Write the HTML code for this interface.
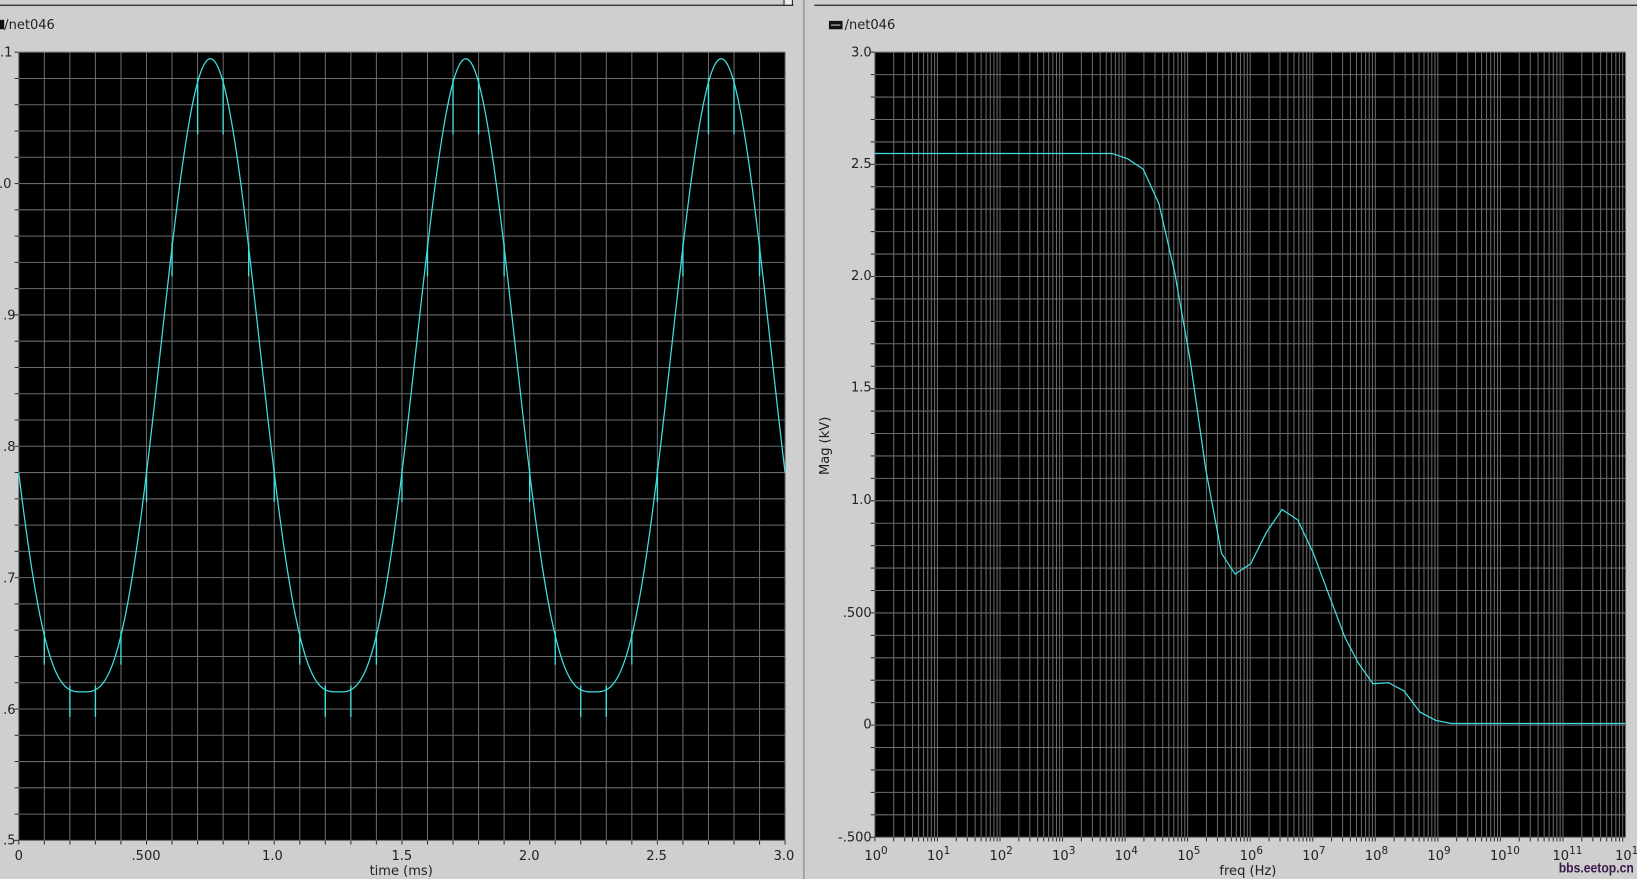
<!DOCTYPE html>
<html><head><meta charset="utf-8"><style>
html,body{margin:0;padding:0;background:#cfcfcf;overflow:hidden}
svg{display:block}
text{font-family:"DejaVu Sans","Liberation Sans",sans-serif;font-size:12.5px;fill:#222}
</style></head><body>
<svg id="s" xmlns="http://www.w3.org/2000/svg" width="1637" height="879" viewBox="0 0 1568 842" preserveAspectRatio="none">
<rect width="1568" height="842" fill="#cfcfcf"/>
<line x1="0" y1="5" x2="760" y2="5" stroke="#222" stroke-width="1.2"/>
<line x1="780" y1="5" x2="1568" y2="5" stroke="#222" stroke-width="1.2"/>
<rect x="751" y="-2" width="8" height="7" fill="#eee" stroke="#222"/>
<line x1="770" y1="0" x2="770" y2="842" stroke="#999" stroke-width="1.5"/>
<rect x="0" y="19" width="4" height="9" fill="#111"/>
<text x="4" y="28">/net046</text>
<rect x="794" y="20" width="13" height="8" fill="#111"/>
<line x1="796" y1="24" x2="805" y2="24" stroke="#ccc"/>
<text x="809" y="28">/net046</text>
<rect x="18" y="50" width="734" height="755" fill="#000"/>
<rect x="838" y="50" width="719" height="752" fill="#000"/>
<g id="g"></g>
<text x="0" y="54">.1</text><text x="-1" y="180">.0</text><text x="3" y="306">.9</text><text x="3" y="432">.8</text><text x="3" y="558">.7</text><text x="3" y="684">.6</text><text x="3" y="809">.5</text>
<text x="14" y="824">0</text><text x="126" y="824">.500</text><text x="251" y="824">1.0</text><text x="375" y="824">1.5</text><text x="497" y="824">2.0</text><text x="619" y="824">2.5</text><text x="741" y="824">3.0</text>
<text x="354" y="838">time (ms)</text>
<g text-anchor="end"><text x="835" y="54">3.0</text><text x="835" y="161">2.5</text><text x="835" y="268">2.0</text><text x="835" y="375">1.5</text><text x="835" y="483">1.0</text><text x="835" y="591">.500</text><text x="835" y="698">0</text><text x="835" y="806">-.500</text></g>
<text transform="translate(794,455) rotate(-90)" font-size="12">Mag (kV)</text>
<text x="1168" y="838">freq (Hz)</text>
<text x="1493" y="836" textLength="72" lengthAdjust="spacingAndGlyphs" style="font-family:'Liberation Sans',sans-serif;font-weight:bold;font-size:13px;fill:#3a1a4a">bbs.eetop.cn</text>
</svg>
<script>
var g=document.getElementById('g'),h='';
function L(a,b,c,d,col,w){h+='<line x1="'+a+'" y1="'+b+'" x2="'+c+'" y2="'+d+'" stroke="'+col+'" stroke-width="'+(w||1)+'"/>';}
var gc='#6a6a6a';
for(var i=0;i<=30;i++){var x=18+i*734/30;L(x,50,x,805,gc);L(x,805,x,809,'#333');}
for(var j=0;j<=30;j++){var y=50+j*755/30;L(18,y,752,y,gc);L(14,y,18,y,'#333');}
var dx=719/12;
for(var d=0;d<12;d++){for(var k=1;k<=9;k++){var x=838+(d+Math.log10(k))*dx;L(x,50,x,802,gc);L(x,802,x,806,'#333');}}
L(1557,50,1557,802,gc);
for(var j=0;j<=35;j++){var y=50+j*752/35;L(838,y,1557,y,gc);L(834,y,838,y,'#333');}
function v(t){var u=(1-Math.cos(2*Math.PI*(t-0.25)))/2;return 0.613+0.482*Math.pow(u,1.53);}
function Y(val){return 805-(val-0.5)*755/0.6;}
var p='';for(var i=0;i<=1500;i++){var t=i*3/1500;p+=(i?'L':'M')+(18+t*734/3).toFixed(2)+' '+Y(v(t)).toFixed(2);}
h+='<path d="'+p+'" fill="none" stroke="#3fe0e0" stroke-width="1.2"/>';
for(var i=1;i<30;i++){var t=i*0.1;var x=18+t*734/3,y=Y(v(t));
 var ph=Math.round(t*10)%10;var up=4,dn=28;
 if(ph==7||ph==8){up=4;dn=50;} else if(ph==2||ph==3){up=4;dn=26;}
 L(x,y-up,x,y+dn,'#3fe0e0',1.3);}
var pts=[[838,147],[1065,147],[1080,152],[1095,162],[1110,195],[1125,260],[1140,345],[1155,450],[1170,530],[1183,550],[1198,540],[1213,510],[1228,488],[1243,498],[1258,530],[1273,570],[1288,610],[1301,635],[1315,655],[1330,654],[1345,662],[1360,682],[1375,690],[1390,693],[1557,693]];
h+='<polyline points="'+pts.map(function(a){return a.join(',')}).join(' ')+'" fill="none" stroke="#3fe0e0" stroke-width="1.2"/>';
for(var d=0;d<=12;d++){var x=838+d*dx;var e=d==12?'1':String(d);
 h+='<text x="'+(x-10)+'" y="824" font-size="13">10<tspan dy="-6" font-size="10">'+e+'</tspan></text>';}
g.innerHTML=h;
</script>
</body></html>
